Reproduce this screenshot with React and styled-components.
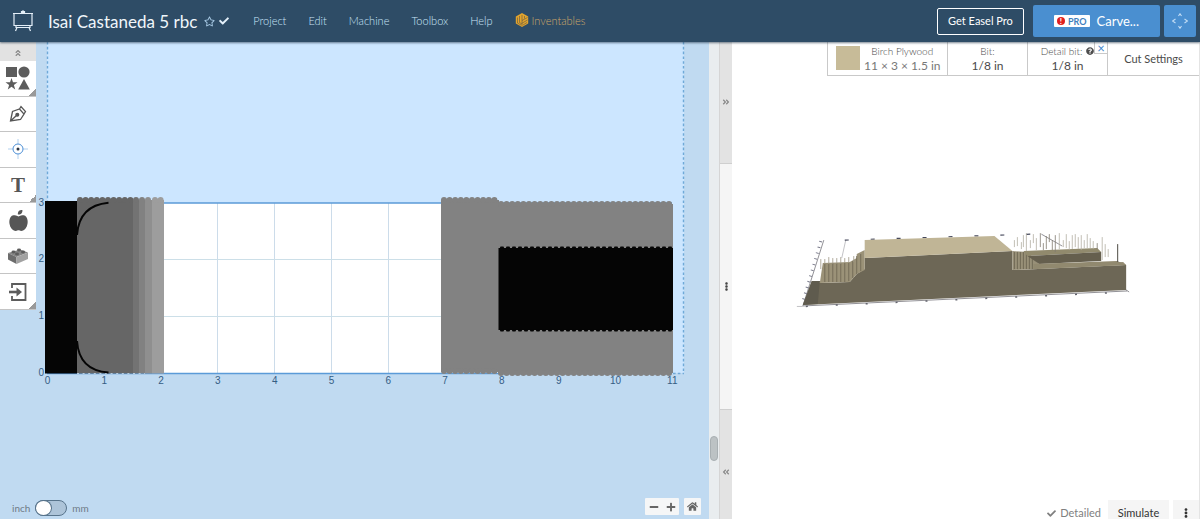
import React, { useState } from "react";
import styled, { createGlobalStyle } from "styled-components";
import {
  FaAngleDoubleUp,
  FaAngleDoubleLeft,
  FaAngleDoubleRight,
  FaAppleAlt,
  FaCheck,
  FaEllipsisV,
  FaHome,
  FaMinus,
  FaPlus,
  FaQuestionCircle,
  FaRegStar,
} from "react-icons/fa";

const UNIT = 56.8;
const ORIGIN = { x: 47.5, y: 373 };

const steps = [
  { x: 77, width: 56, fill: "#666666" },
  { x: 133, width: 6, fill: "#737373" },
  { x: 139, width: 6, fill: "#818181" },
  { x: 145, width: 7, fill: "#8f8f8f" },
  { x: 152, width: 12, fill: "#9d9d9d" },
];

const Scallop = ({ x1, x2, y, color }) => (
  <path
    d={`M${x1 + 3} ${y + 3}H${x2 - 2}`}
    stroke={color}
    strokeWidth="6"
    strokeLinecap="round"
    strokeDasharray="0 5.6"
  />
);

const Design = () => (
  <Drawing viewBox="36 42 673 477" preserveAspectRatio="xMinYMin meet">
    <rect x="47" y="42" width="637" height="331" fill="#cce6ff" />
    <path
      d="M47.5 42V202M683.5 42V373M673 373.5H684"
      stroke="#6fa9d8"
      strokeWidth="1.4"
      strokeDasharray="2.6 2.2"
      fill="none"
    />
    <rect x="47" y="203" width="625" height="170" fill="#fff" />
    {[2, 3, 4, 5, 6, 7].map((n) => (
      <path
        key={n}
        d={`M${Math.floor(ORIGIN.x + n * UNIT)}.5 203V373`}
        stroke="#ccdcea"
      />
    ))}
    <path d="M164 259.5H441M164 316.5H441" stroke="#ccdfe8" />
    <path d="M47 203H672M47 373.5H672" stroke="#5b9bd8" strokeWidth="1.6" />

    <rect x="45" y="201" width="32" height="172.5" fill="#050505" />
    {steps.map((step) => (
      <React.Fragment key={step.x}>
        <rect
          x={step.x}
          y="200"
          width={step.width}
          height="173.5"
          fill={step.fill}
        />
        <Scallop
          x1={step.x}
          x2={step.x + step.width}
          y={197}
          color={step.fill}
        />
      </React.Fragment>
    ))}
    <path
      d="M77 373.5H145"
      stroke="#b8cddf"
      strokeDasharray="2 3.6"
      strokeWidth="1"
    />
    <path
      d="M108.500 202.800Q79 205.500 77 235M77 341Q79 370.500 108.500 372.500"
      stroke="#050505"
      strokeWidth="2"
      fill="none"
    />

    <rect x="441" y="200" width="58" height="172" fill="#828282" />
    <rect x="498" y="204" width="175" height="169" fill="#828282" />
    <Scallop x1={441} x2={499} y={197} color="#828282" />
    <Scallop x1={441} x2={499} y={368} color="#828282" />
    <Scallop x1={498} x2={673} y={201} color="#828282" />
    <Scallop x1={498} x2={673} y={370} color="#828282" />
    <rect x="498.500" y="248" width="174.500" height="82" fill="#050505" />
    <path
      d="M501 247.500H671M501 330.500H671"
      stroke="#050505"
      strokeWidth="2"
      strokeLinecap="round"
      strokeDasharray="2 4"
    />

    {Array.from({ length: 12 }, (_, n) => (
      <AxisLabel key={n} x={ORIGIN.x + n * UNIT} y="384" $anchor="middle">
        {n}
      </AxisLabel>
    ))}
    {[0, 1, 2, 3].map((n) => (
      <AxisLabel key={n} x="44" y={376 - n * UNIT} $anchor="end">
        {n}
      </AxisLabel>
    ))}
  </Drawing>
);

const hairs = [
  [1015, 240, 247], [1018, 237, 246], [1022, 242, 249], [1024, 235, 247],
  [1027, 233, 251], [1031, 240, 248], [1034, 234, 243], [1037, 238, 250],
  [1041, 233, 247], [1044, 243, 250], [1047, 236, 249], [1050, 234, 242],
  [1053, 240, 250], [1056, 235, 252], [1060, 233, 249], [1064, 240, 247],
  [1067, 234, 248], [1070, 241, 250], [1073, 235, 249], [1076, 234, 247],
  [1079, 237, 249], [1082, 235, 250], [1085, 240, 248], [1088, 234, 248],
  [1091, 238, 248], [1094, 241, 249], [1098, 243, 249], [1103, 237, 260],
  [1106, 244, 257], [1109, 249, 257],
];

const Model = () => (
  <ModelDrawing viewBox="732 76 468 424" preserveAspectRatio="xMidYMid meet">
    <path
      d="M824 240L803 306L1128 291M1042 234L1063 246M1124 288L1130 292"
      stroke="#77767c"
      strokeWidth="0.8"
      fill="none"
    />
    <path
      d="M821 241L803 302"
      stroke="#7b7c8c"
      strokeWidth="3"
      strokeDasharray="1 5"
      fill="none"
    />
    <path
      d="M797 306.500H803M846 240L842 258"
      stroke="#b4b4b8"
      strokeWidth="0.8"
    />
    <path
      d="M845 240L1032 234"
      stroke="#44475a"
      strokeWidth="1.200"
      strokeDasharray="4 22"
    />
    <path
      d="M806 306.500L1130 292"
      stroke="#62636c"
      strokeWidth="1.500"
      strokeDasharray="2 28"
    />
    <path
      d="M803 305L812 281L820 281L820 283L850 282L857 274L865 269V258L1013 251V270L1127 265V290Z"
      fill="#6d6756"
    />
    <path d="M803 305L812 281H820L818 304Z" fill="#5f5b4e" />
    <path d="M820 283L823 263L850 262L857 258V254L865 250V270L857 274L850 282Z" fill="#9b9278" />
    <path
      d="M825 264V282M829 264V282M833 263V282M837 263V282M841 263V282M845 263V282M849 263V281M853 261V278M857 256V274M861 254V271"
      stroke="#746c58"
      strokeWidth="1"
    />
    <path
      d="M821 259V269M825 259V264M829 257V264M833 258V264M837 258V264M841 257V264M845 258V263M849 257V263M854 256V262"
      stroke="#9d9684"
      strokeWidth="0.8"
    />
    <path d="M865 240L995 236L1013 251L865 258Z" fill="#c0b596" />
    <path d="M1013 251L1028 252L1040 264L1124 262L1127 265L1013 270Z" fill="#989078" />
    <path
      d="M1015 252V269M1018 252V269M1021 252V269M1024 252V269M1027 252V269M1030 256V269M1033 259V269"
      stroke="#706955"
      strokeWidth="1"
    />
    <path d="M1024 251L1098 248L1102 252L1028 256Z" fill="#918a6d" />
    <path d="M1028 256L1102 252V261L1040 264Z" fill="#655f4e" />
    <path d="M1034 264L1118 261L1127 265L1034 269Z" fill="#91896f" />
    {hairs.map(([x, y1, y2]) => (
      <path
        key={x}
        d={`M${x} ${y1}V${y2}`}
        stroke={x % 3 === 0 ? "#817b70" : "#b3aea2"}
        strokeWidth="0.8"
      />
    ))}
    <path d="M1118.500 244V262" stroke="#4d4a43" strokeWidth="1" />
  </ModelDrawing>
);

const EaselLogo = () => (
  <svg width="22" height="22" viewBox="0 0 22 22" fill="none" stroke="#e4eff8">
    <path d="M2 3.500H20V15.500H2ZM4 15.500V17.500H18V15.500M5 17.500L3.500 21M17 17.500L18.500 21M1 3.500H21M9.500 3V1.500H12.500V3" strokeWidth="1.200" />
    <path d="M11 0.500V3" strokeWidth="2" />
  </svg>
);

const InventablesLogo = () => (
  <svg width="14" height="14" viewBox="0 0 14 14" fill="none">
    <path d="M7 0L13.200 3.500V10.500L7 14L0.800 10.500V3.500Z" fill="#e3a42c" />
    <path
      d="M7 7.500V13M7 7.500L12.500 4.500M7 7.500V2M4.500 3V9.500L7 11M2.500 4.500V10M9.500 3V5.500M12.500 7L7 10.200M12 9.500L8 12M2.500 10L6 12"
      stroke="#5b5547"
      strokeWidth="0.6"
    />
  </svg>
);

const ShapesIcon = () => (
  <svg width="26" height="26" viewBox="0 0 26 26" fill="#5c5c5c">
    <rect x="1" y="2" width="11" height="10" />
    <circle cx="19" cy="7" r="5.600" />
    <path d="M6.500 13L8 17.300H12.500L8.900 20L10.200 24.500L6.500 21.800L2.800 24.500L4.100 20L0.500 17.300H5Z" />
    <path d="M19 14L24.800 24.500H13.200Z" />
  </svg>
);

const PenIcon = () => (
  <svg width="18" height="18" viewBox="0 0 18 18" fill="none" stroke="#565656" strokeWidth="1.300">
    <path d="M1.500 16L3.500 6.500L10.500 4L15 9L11.500 14.500ZM10.500 4L12 1.500L16.500 6.500L15 9M1.500 16L7.500 10.500" />
    <circle cx="8.300" cy="9.800" r="1.400" fill="#565656" />
  </svg>
);

const TargetIcon = () => (
  <svg width="20" height="20" viewBox="0 0 20 20" fill="none">
    <path d="M10 0V20M0 10H20" stroke="#b1d0ee" />
    <circle cx="10" cy="10" r="5" fill="#fff" stroke="#4d8fd6" />
    <circle cx="10" cy="10" r="1.500" fill="#2b3440" />
  </svg>
);

const BrickIcon = () => (
  <svg width="20" height="16" viewBox="0 0 20 16">
    <path d="M0 5L12 1.500L20 4.500L8.500 9Z" fill="#858585" />
    <path d="M0 5L8.500 9V16L0 11.500Z" fill="#6c6c6c" />
    <path d="M8.500 9L20 4.500V11L8.500 16Z" fill="#a2a2a2" />
    <g fill="#5c5c5c">
      <ellipse cx="5.500" cy="4" rx="2" ry="1.400" />
      <ellipse cx="11" cy="2" rx="2" ry="1.400" />
      <ellipse cx="9" cy="6" rx="2" ry="1.400" />
      <ellipse cx="15" cy="4" rx="2" ry="1.400" />
    </g>
  </svg>
);

const ImportIcon = () => (
  <svg width="18" height="18" viewBox="0 0 18 18" fill="none" stroke="#5c5c5c">
    <path d="M3 5V1H16.500V17H3V13" strokeWidth="1.800" />
    <path d="M0 9H9" strokeWidth="2.600" />
    <path d="M7.500 4.500L13 9L7.500 13.500Z" fill="#5c5c5c" stroke="none" />
  </svg>
);

const ArrowsIcon = () => (
  <svg width="16" height="16" viewBox="0 0 16 16" fill="none" stroke="#c4def5" strokeWidth="1.100">
    <path d="M6.500 3L8 0.800L9.500 3M6.500 13L8 15.200L9.500 13M3.500 6L0.500 8L3.500 10M12.500 6L15.500 8L12.500 10" />
  </svg>
);

const tools = [
  { name: "Shapes", icon: <ShapesIcon />, more: true },
  { name: "Pen", icon: <PenIcon /> },
  { name: "Drill point", icon: <TargetIcon /> },
  { name: "Text", icon: "T", more: true },
  { name: "Icons", icon: <FaAppleAlt size={21} /> },
  { name: "Apps", icon: <BrickIcon /> },
  { name: "Import", icon: <ImportIcon />, more: true },
];

const App = () => {
  const [metric, setMetric] = useState(false);

  return (
    <Wrapper>
      <GlobalStyle />
      <Header>
        <LogoLink href="#" aria-label="Easel">
          <EaselLogo />
        </LogoLink>
        <Title>Isai Castaneda 5 rbc</Title>
        <TitleIcons>
          <FaRegStar size={11} />
          <FaCheck size={10} color="#e4f0fa" />
        </TitleIcons>
        <Menu>
          {["Project", "Edit", "Machine", "Toolbox", "Help"].map((item) => (
            <MenuLink href="#" key={item}>
              {item}
            </MenuLink>
          ))}
          <BrandLink href="#">
            <InventablesLogo />
            Inventables
          </BrandLink>
        </Menu>
        <ProButton>Get Easel Pro</ProButton>
        <CarveButton>
          <ProBadge>
            <Alert>!</Alert>PRO
          </ProBadge>
          Carve...
        </CarveButton>
        <JogButton aria-label="Jog machine">
          <ArrowsIcon />
        </JogButton>
      </Header>
      <Main>
        <Editor>
          <Toolbar>
            <Collapse aria-label="Collapse toolbar">
              <FaAngleDoubleUp size={8} />
            </Collapse>
            {tools.map((tool) => (
              <Tool key={tool.name} aria-label={tool.name} $more={tool.more}>
                {tool.icon}
              </Tool>
            ))}
          </Toolbar>
          <Canvas>
            <Design />
          </Canvas>
          <Units>
            inch
            <Switch
              type="checkbox"
              aria-label="Use millimetres"
              checked={metric}
              onChange={(e) => setMetric(e.target.checked)}
            />
            mm
          </Units>
          <Zoom>
            <ZoomGroup>
              <ZoomButton aria-label="Zoom out">
                <FaMinus size={10} />
              </ZoomButton>
              <ZoomButton aria-label="Zoom in">
                <FaPlus size={10} />
              </ZoomButton>
            </ZoomGroup>
            <ZoomGroup>
              <ZoomButton aria-label="Reset view">
                <FaHome size={11} />
              </ZoomButton>
            </ZoomGroup>
          </Zoom>
        </Editor>
        <Track>
          <Thumb />
        </Track>
        <Splitter>
          <SplitButton aria-label="Expand editor" $grow={121}>
            <FaAngleDoubleRight size={8} />
          </SplitButton>
          <SplitButton aria-label="Resize panels" $grow={247} $handle>
            <FaEllipsisV size={9} />
          </SplitButton>
          <SplitButton aria-label="Expand preview" $grow={109}>
            <FaAngleDoubleLeft size={8} />
          </SplitButton>
        </Splitter>
        <Preview>
          <Settings>
            <Material>
              <Swatch />
              <Stack>
                <Label>Birch Plywood</Label>
                <Size>11 × 3 × 1.5 in</Size>
              </Stack>
            </Material>
            <Setting>
              <Label>Bit:</Label>
              <Value>1/8 in</Value>
            </Setting>
            <Setting>
              <Label>
                Detail bit: <FaQuestionCircle size={8} color="#4d4d4d" />
              </Label>
              <Value>1/8 in</Value>
              <Remove aria-label="Remove detail bit">×</Remove>
            </Setting>
            <CutSettings>Cut Settings</CutSettings>
          </Settings>
          <Model />
          <Footer>
            <Detailed>
              <FaCheck size={9} />
              Detailed
            </Detailed>
            <FooterButton $width={61}>Simulate</FooterButton>
            <FooterButton $width={26} aria-label="More options">
              <FaEllipsisV size={10} />
            </FooterButton>
          </Footer>
        </Preview>
      </Main>
    </Wrapper>
  );
};

const GlobalStyle = createGlobalStyle`
  * {
    box-sizing: border-box;
  }

  body {
    margin: 0;
    font-family: Lato, sans-serif;
    color: #4a4a4a;
  }

  button {
    font-family: inherit;
    color: inherit;
    border: none;
    margin: 0;
    padding: 0;
    cursor: pointer;
  }
`;

const Wrapper = styled.div`
  display: flex;
  flex-direction: column;
  height: 100vh;
  overflow: hidden;
`;

const Header = styled.header`
  display: flex;
  align-items: center;
  flex: none;
  height: 42px;
  padding: 0 4px 0 12px;
  background: #2e4c66;
  box-shadow: 0 1px 2px rgba(30, 50, 70, 0.6);
  z-index: 1;
`;

const LogoLink = styled.a`
  display: flex;
  margin-right: 14px;
`;

const Title = styled.h1`
  margin: 0;
  font-size: 17px;
  font-weight: 400;
  color: #f0f6fb;
  white-space: nowrap;
`;

const TitleIcons = styled.div`
  display: flex;
  align-items: center;
  gap: 4px;
  margin: 0 24px 0 7px;
  color: #a9cbe6;
`;

const Menu = styled.nav`
  display: flex;
  align-items: center;
  gap: 22px;
  flex: 1;
  padding-bottom: 2px;
`;

const MenuLink = styled.a`
  font-size: 11px;
  font-weight: 300;
  color: #c9e4f8;
  text-decoration: none;
`;

const BrandLink = styled(MenuLink)`
  display: flex;
  align-items: center;
  gap: 3px;
  color: #d0a869;
`;

const ProButton = styled.button`
  width: 87px;
  height: 27px;
  margin-right: 9px;
  padding-bottom: 2px;
  border: 1px solid #fff;
  border-radius: 2px;
  background: transparent;
  color: #fff;
  font-size: 11px;
`;

const CarveButton = styled.button`
  display: flex;
  align-items: center;
  justify-content: center;
  gap: 7px;
  width: 127px;
  height: 32px;
  margin-right: 4px;
  border-radius: 2px;
  background: #4a8fd0;
  color: #fff;
  font-size: 13px;
`;

const ProBadge = styled.span`
  display: flex;
  align-items: center;
  gap: 3px;
  height: 12px;
  padding: 0 3px;
  border-radius: 1px;
  background: #fff;
  color: #3f7fbd;
  font-size: 9px;
  font-weight: 700;
`;

const Alert = styled.span`
  width: 8px;
  height: 8px;
  border-radius: 50%;
  background: #e02020;
  color: #fff;
  font-size: 8px;
  line-height: 8px;
  text-align: center;
`;

const JogButton = styled(CarveButton)`
  width: 32px;
  margin-right: 0;
`;

const Main = styled.main`
  display: flex;
  flex: 1;
  min-height: 0;
`;

const Editor = styled.section`
  position: relative;
  display: flex;
  align-items: flex-start;
  flex: 1;
  min-width: 0;
  background: #c0daf1;
`;

const Toolbar = styled.div`
  display: flex;
  flex-direction: column;
  flex: none;
  width: 36px;
  height: 268px;
  background: #fff;
`;

const Collapse = styled.button`
  height: 19px;
  background: #e2e2e2;
  color: #888;
`;

const Tool = styled.button`
  display: flex;
  align-items: center;
  justify-content: center;
  flex: 1;
  border-bottom: 1px solid #c4c4c4;
  background: ${(props) =>
    props.$more
      ? "linear-gradient(135deg, transparent 50%, #999 50%) right bottom / 7px 7px no-repeat #fff"
      : "#fff"};
  color: #565656;
  font-family: "Liberation Serif", serif;
  font-size: 21px;
  font-weight: 700;
`;

const Canvas = styled.div`
  flex: 1;
  align-self: stretch;
  min-width: 0;
`;

const Drawing = styled.svg`
  display: block;
  width: 100%;
  height: 100%;
`;

const AxisLabel = styled.text`
  font-family: "Liberation Sans", Arial, sans-serif;
  font-size: 10px;
  fill: #355d84;
  text-anchor: ${(props) => props.$anchor};
`;

const Units = styled.label`
  position: absolute;
  left: 12px;
  bottom: 3px;
  display: flex;
  align-items: center;
  gap: 5px;
  font-size: 10px;
  color: #6f7b86;
`;

const Switch = styled.input`
  appearance: none;
  width: 32px;
  height: 16px;
  margin: 0;
  border: 1px solid #58748c;
  border-radius: 8px;
  background: #adc4d9;

  &::before {
    content: "";
    display: block;
    width: 15px;
    height: 14px;
    border-radius: 50%;
    background: #fff;
    box-shadow: 0 0 0 1px #58748c;
  }

  &:checked::before {
    margin-left: 15px;
  }
`;

const Zoom = styled.div`
  position: absolute;
  right: 8px;
  bottom: 4px;
  display: flex;
  gap: 5px;
`;

const ZoomGroup = styled.div`
  display: flex;
  border-radius: 1px;
  background: #f5f6f7;
`;

const ZoomButton = styled.button`
  display: flex;
  align-items: center;
  justify-content: center;
  width: 17px;
  height: 17px;
  background: transparent;
  color: #666;
`;

const Track = styled.div`
  display: flex;
  align-items: flex-end;
  justify-content: center;
  flex: none;
  width: 10px;
  padding-bottom: 58px;
  background: #e9edef;
`;

const Thumb = styled.div`
  width: 8px;
  height: 25px;
  border: 1px solid #a8afb2;
  border-radius: 4px;
  background: #bcc2c4;
`;

const Splitter = styled.div`
  display: flex;
  flex-direction: column;
  flex: none;
  width: 13px;
  border-left: 1px solid #d5d5d5;
`;

const SplitButton = styled.button`
  display: flex;
  align-items: center;
  justify-content: center;
  flex: ${(props) => props.$grow} 1 0;
  border: solid #cfcfcf;
  border-width: ${(props) => (props.$handle ? "1px 0" : "0")};
  background: ${(props) => (props.$handle ? "#f5f5f5" : "#e3e3e3")};
  color: ${(props) => (props.$handle ? "#444" : "#888")};

  &:last-child svg {
    margin-top: 14px;
  }
`;

const Preview = styled.section`
  display: flex;
  flex-direction: column;
  width: 39%;
  background: #fff;
  border-right: 1px solid #e4e4e4;
`;

const Settings = styled.div`
  display: flex;
  align-self: flex-end;
  height: 34px;
  border: solid #c9c9c9;
  border-width: 0 0 1px 1px;
`;

const Setting = styled.div`
  position: relative;
  display: flex;
  flex-direction: column;
  align-items: center;
  width: 80px;
  padding-top: 2px;
  border-right: 1px solid #c9c9c9;
`;

const Material = styled(Setting)`
  flex-direction: row;
  align-items: flex-start;
  gap: 4px;
  width: 120px;
  padding-left: 8px;
`;

const Swatch = styled.div`
  flex: none;
  width: 24px;
  height: 24px;
  margin-top: 2px;
  background: #c7bb98;
`;

const Stack = styled.div`
  display: flex;
  flex-direction: column;
  align-items: center;
`;

const Label = styled.div`
  display: flex;
  align-items: center;
  gap: 4px;
  font-size: 10px;
  font-weight: 300;
  line-height: 14px;
  color: #4a4a4a;
  white-space: nowrap;
`;

const Value = styled.div`
  font-size: 12px;
  line-height: 15px;
  white-space: nowrap;
`;

const Size = styled(Value)`
  color: #777;
`;

const Remove = styled.button`
  position: absolute;
  top: 0;
  right: 0;
  width: 13px;
  height: 12px;
  border: solid #c9c9c9;
  border-width: 0 0 1px 1px;
  background: #fff;
  color: #3f86cc;
  font-size: 13px;
  line-height: 10px;
`;

const CutSettings = styled.button`
  width: 91px;
  background: #fff;
  font-size: 11px;
`;

const ModelDrawing = styled.svg`
  display: block;
  flex: 1;
  min-height: 0;
  width: 100%;
`;

const Footer = styled.footer`
  display: flex;
  justify-content: flex-end;
  flex: none;
  height: 19px;
`;

const Detailed = styled.button`
  display: flex;
  align-items: center;
  gap: 4px;
  padding-top: 7px;
  margin-right: 7px;
  background: transparent;
  color: #808080;
  font-size: 11px;
  line-height: 12px;
`;

const FooterButton = styled.button`
  display: flex;
  align-items: center;
  justify-content: center;
  width: ${(props) => props.$width}px;
  padding-top: 7px;
  background: #f5f5f5;
  color: #333;
  font-size: 11px;
  line-height: 12px;

  & + & {
    margin-left: 4px;
  }
`;

export default App;
